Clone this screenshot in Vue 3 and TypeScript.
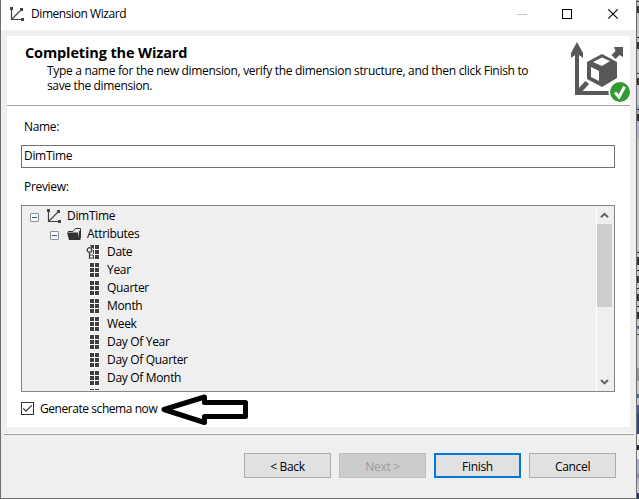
<script setup lang="ts">
interface Attribute { name: string; key?: boolean }
interface Segment { y: number; h: number; fill: string }

const attributes: Attribute[] = [
  { name: 'Date', key: true },
  { name: 'Year' },
  { name: 'Quarter' },
  { name: 'Month' },
  { name: 'Week' },
  { name: 'Day Of Year' },
  { name: 'Day Of Quarter' },
  { name: 'Day Of Month' },
]

const segments: Segment[] = [
  { y: 1, h: 1, fill: '#222' }, { y: 6, h: 7, fill: '#333' },
  { y: 37, h: 1, fill: '#222' }, { y: 42, h: 7, fill: '#333' },
  { y: 73, h: 1, fill: '#222' }, { y: 78, h: 7, fill: '#333' },
  { y: 105, h: 9, fill: '#9facd0' }, { y: 109, h: 1, fill: '#222' },
  { y: 114, h: 7, fill: '#333' }, { y: 121, h: 18, fill: '#b1b9d2' },
  { y: 252, h: 1, fill: '#222' }, { y: 257, h: 8, fill: '#333' },
  { y: 270, h: 1, fill: '#222' }, { y: 276, h: 7, fill: '#333' },
  { y: 288, h: 1, fill: '#222' }, { y: 294, h: 7, fill: '#333' },
  { y: 306, h: 1, fill: '#222' }, { y: 312, h: 7, fill: '#333' },
  { y: 326, h: 3, fill: '#44719a' }, { y: 334, h: 1, fill: '#513b28' },
  { y: 368, h: 13, fill: '#969696' }, { y: 394, h: 4, fill: '#386a93' },
  { y: 405, h: 8, fill: '#4a5c91' }, { y: 413, h: 21, fill: '#30477f' },
  { y: 434, h: 25, fill: '#ededed' }, { y: 445, h: 5, fill: '#222' },
  { y: 459, h: 15, fill: '#a7b0d0' }, { y: 474, h: 4, fill: '#8c8c94' },
  { y: 478, h: 6, fill: '#b5bbd3' }, { y: 493, h: 6, fill: '#203b63' },
]
</script>

<template>
  <div class="screen">
    <div class="window">
      <header class="titlebar">
        <svg class="axis" width="14" height="14" viewBox="0 0 14 14">
          <path d="M1.5 1V12.5H13M2 12L12 2" />
          <path class="tips" d="M0 0h3v3H0zM10 1h3v3h-3zM11 11h3v3h-3z" />
        </svg>
        <span class="title t">Dimension Wizard</span>
        <svg class="controls" width="108" height="14" viewBox="0 0 108 14">
          <path d="M0 7.5h10" stroke="#c5c5c5" />
          <rect x="45.5" y="2.5" width="9" height="9" fill="none" stroke="#000" />
          <path d="M91.3 2.3l9.4 9.4M100.7 2.3l-9.4 9.4" stroke="#000" stroke-width="1.1" />
        </svg>
      </header>

      <main class="panel">
        <section class="banner">
          <div class="copy">
            <h1>Completing the Wizard</h1>
            <p><span class="p1">Type a name for the new dimension, verify the dimension structure, and then click Finish to</span><br><span class="p2">save the dimension.</span></p>
          </div>
          <svg class="cube" width="59" height="62" viewBox="0 0 59 62">
            <g fill="#58585a">
              <path d="M4 53V13L0 16V11L6 0L12 11V16L8 13V49H38V53Z" />
              <path d="M4 50L14.5 39L18 42L8 53Z" />
              <path d="M40.5 13L44.5 9L43 5H52V15L48.5 13L44.5 17Z" />
              <path d="M16 20L31 12L46 20V36L31 45L16 37Z" />
            </g>
            <path d="M22 20L31 15.5L39 19L31 24ZM20 25L28 29V39L20 35Z" fill="#fff" />
            <circle cx="49" cy="50" r="11.5" fill="#fff" />
            <circle cx="49" cy="50" r="10" fill="#339933" />
            <path d="M44 50.5L48 55L53.5 44.8" fill="none" stroke="#fff" stroke-width="3" />
          </svg>
        </section>

        <section class="form">
          <label class="name-label t">Name:</label>
          <div class="field t">DimTime</div>
          <label class="preview-label t">Preview:</label>

          <div class="preview">
            <div class="tree">
              <div class="row root">
                <i class="toggle"></i>
                <svg class="axis" width="14" height="14" viewBox="0 0 14 14">
                  <path d="M1.5 1V12.5H13M2 12L12 2" />
                  <path class="tips" d="M0 0h3v3H0zM10 1h3v3h-3zM11 11h3v3h-3z" />
                </svg>
                <span class="t">DimTime</span>
              </div>
              <div class="row group">
                <i class="toggle"></i>
                <svg class="folder" width="14" height="14" viewBox="0 0 14 14">
                  <path d="M1 4.5H6L8.5 1.5H13.5V11" fill="none" stroke="#333" />
                  <path d="M0 5.5H11L12.5 13H2Z" fill="#333" />
                  <path d="M12 4h1.5v9H12z" fill="#333" />
                </svg>
                <span class="t">Attributes</span>
              </div>
              <div v-for="attribute in attributes" :key="attribute.name" class="row leaf">
                <svg width="14" height="16" viewBox="0 0 14 16">
                  <path d="M3 0h11v16H3z" fill="#fafafa" />
                  <path d="M4 1h4v4H4zM9 1h4v4H9zM4 6h4v4H4zM9 6h4v4H9zM4 11h4v4H4zM9 11h4v4H9z" fill="#3e3e3e" />
                  <g v-if="attribute.key">
                    <path d="M0 2h7v14H0z" fill="#efefef" />
                    <path d="M5 1h3v3H5z" fill="#3e3e3e" />
                    <circle cx="3.5" cy="6" r="2.3" fill="#efefef" stroke="#3e3e3e" stroke-width="1.3" />
                    <path d="M3.5 8v7M4 11h3M4 14h3" fill="none" stroke="#3e3e3e" stroke-width="1.2" />
                  </g>
                </svg>
                <span class="t">{{ attribute.name }}</span>
              </div>
              <div class="row leaf">
                <svg width="14" height="16" viewBox="0 0 14 16">
                  <path d="M3 0h11v16H3z" fill="#fafafa" />
                  <path d="M4 1h4v4H4zM9 1h4v4H9z" fill="#3e3e3e" />
                </svg>
              </div>
            </div>
            <div class="scrollbar">
              <svg width="15" height="17"><path d="M4 10.2L7.5 6.8L11 10.2" /></svg>
              <div class="thumb"></div>
              <svg class="down" width="15" height="17"><path d="M4 7L7.5 10.4L11 7" /></svg>
            </div>
          </div>

          <div class="option">
            <svg width="13" height="13" viewBox="0 0 13 13">
              <rect x=".5" y=".5" width="12" height="12" fill="#fff" stroke="#333" />
              <path d="M2.2 6.4L5 9.2L10.8 3.4" fill="none" stroke="#333" stroke-width="1.2" />
            </svg>
            <span class="t">Generate schema now</span>
            <svg class="pointer" width="87" height="31" viewBox="0 0 87 31">
              <path d="M3 15.5L43.5 3V8.5H84.5V22.5H43.5V28.5Z" />
            </svg>
          </div>
        </section>
      </main>

      <footer class="actions">
        <button class="t">&lt; Back</button>
        <button class="t" disabled>Next &gt;</button>
        <button class="t primary">Finish</button>
        <button class="t">Cancel</button>
      </footer>
    </div>
    <svg class="edge" width="2" height="499">
      <rect v-for="s in segments" :key="s.y" x="0" :y="s.y" width="2" :height="s.h" :fill="s.fill" />
    </svg>
  </div>
</template>

<style>
body { margin: 0; overflow: hidden; }
</style>

<style scoped>
* { box-sizing: border-box; }
.screen { display: flex; width: 639px; height: 499px; background: #c7c7c9; font: 12px/16px "Open Sans", "Noto Sans", sans-serif; color: #000; }
.t { letter-spacing: -.32px; white-space: nowrap; }
svg { display: block; flex: none; }
.edge { width: 2px; height: 499px; }
.window { display: flex; flex-direction: column; width: 637px; height: 499px; background: #efefef; border: solid #6e6e6e; border-width: 0 1px 1px; }
.titlebar { display: flex; align-items: center; height: 30px; padding: 0 11px 2px 9px; background: #fff; }
.title { margin-left: 7px; flex: 1; letter-spacing: -.43px; }
.axis { fill: none; stroke: #444; stroke-width: 1.2; }
.axis .tips { fill: #444; stroke: none; }
.panel { width: 623px; height: 391px; margin: 6px 0 0 6px; background: #fff; }
.banner { display: flex; height: 70px; border-bottom: 1px solid #a0a0a0; }
.copy { flex: none; width: 564px; padding: 7px 0 0 18px; }
h1 { margin: 0; font-size: 14.5px; line-height: 19px; font-weight: 700; letter-spacing: -.13px; white-space: nowrap; }
p { margin: 1px 0 0 22px; line-height: 15px; white-space: nowrap; }
.p1 { letter-spacing: -.31px; }
.p2 { letter-spacing: -.35px; }
.cube { margin: 6px 0 0; }
.form { padding: 13px 15px 0 14px; }
label { display: block; height: 16px; padding-left: 3px; }
.field { height: 23px; margin-top: 10px; padding: 2px 2px 0; border: 1px solid #707070; }
.preview-label { margin-top: 11px; }
.preview { display: flex; height: 187px; margin-top: 10px; padding: 1px 2px 1px 0; border: 1px solid #828790; background: #efefef; }
.tree { flex: 1; overflow: hidden; border-right: 1px solid #fff; }
.row { display: flex; align-items: center; height: 18px; }
.root { padding-left: 8px; }
.group { padding-left: 28px; }
.leaf { padding-left: 64px; }
.toggle { display: flex; align-items: center; width: 9px; height: 9px; margin-top: 2px; border: 1px solid #919191; border-radius: 1px; background: #f8f8f8; }
.toggle::before { content: ""; width: 5px; height: 1px; margin-left: 1px; background: #3859a4; }
.root .axis, .group .folder { margin: 0 6px 0 8px; }
.leaf svg { margin-right: 7px; }
.scrollbar { display: flex; flex-direction: column; width: 15px; }
.scrollbar path { fill: none; stroke: #606060; stroke-width: 2; }
.thumb { height: 83px; background: #cdcdcd; }
.down { margin-top: auto; }
.option { display: flex; align-items: center; height: 33px; }
.option .t { width: 121px; margin-left: 6px; letter-spacing: -.44px; }
.pointer { margin-top: 2px; }
.pointer path { fill: #fff; stroke: #000; stroke-width: 5; stroke-linejoin: round; }
.actions { display: flex; gap: 8px; height: 65px; margin: 6px 2px 0 3px; padding: 19px 0 0 240px; border-top: 1px solid #fff; box-shadow: inset 0 1px #a0a0a0; }
button { width: 87px; height: 25px; padding: 2px 0 0; font: inherit; color: #000; background: #e1e1e1; border: 1px solid #adadad; border-radius: 0; }
button:disabled { color: #9c9c9c; background: #ccc; border-color: #bfbfbf; }
button.primary { border: 2px solid #0078d7; }
</style>
